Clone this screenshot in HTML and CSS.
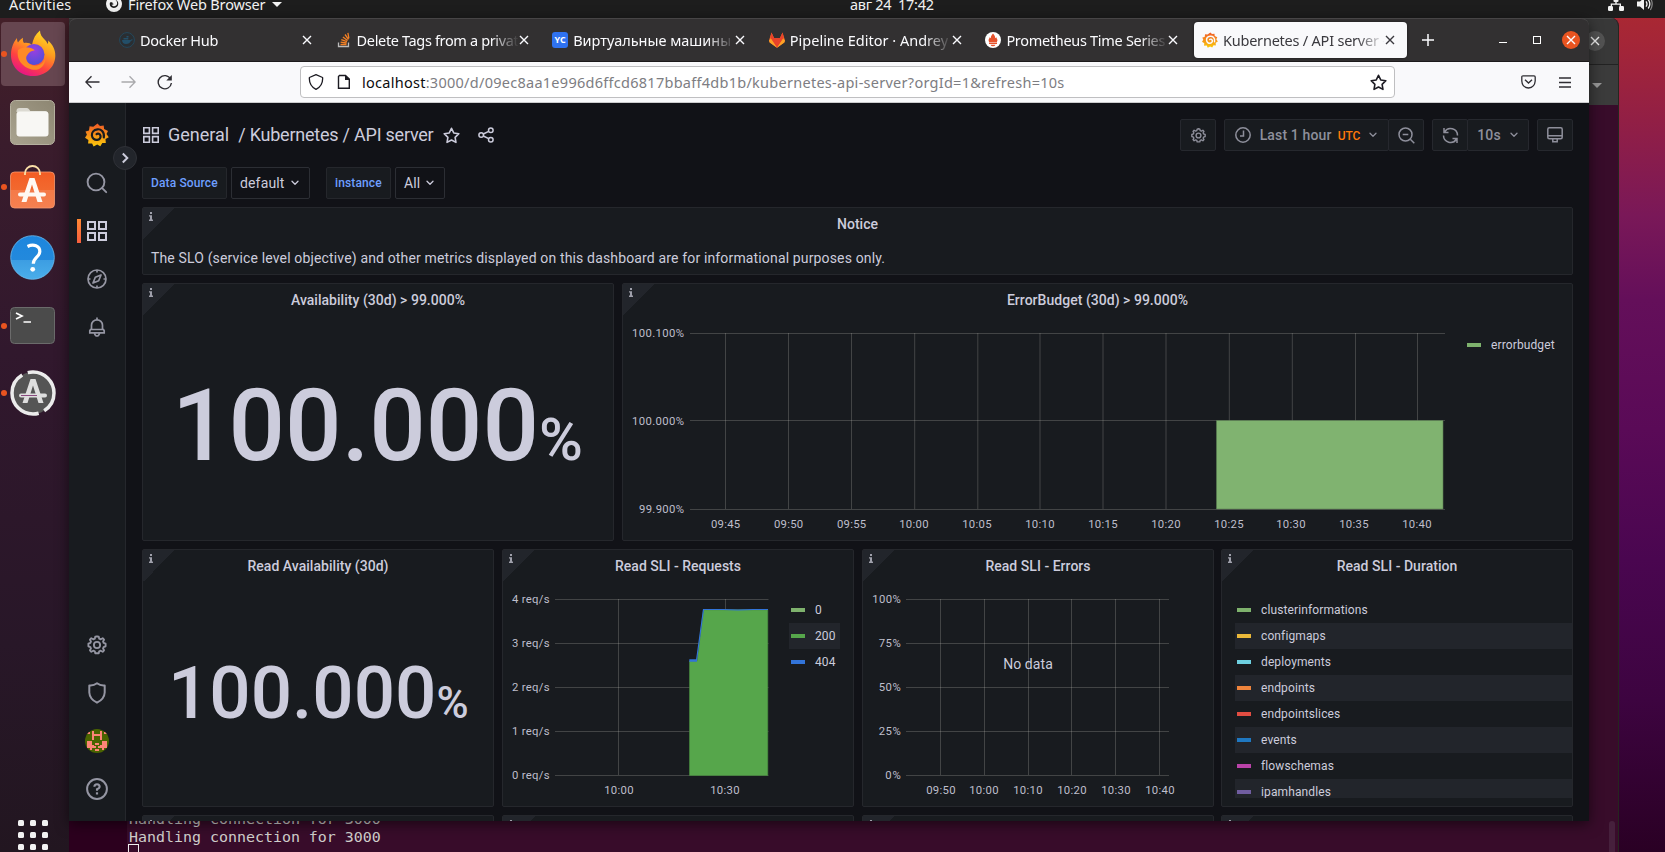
FILE: index.html
```html
<!DOCTYPE html>
<html lang="en">
<head>
<meta charset="utf-8">
<title>Kubernetes / API server - Grafana</title>
<link rel="stylesheet" href="styles.css">
</head>
<body>
<svg class="defs" width="0" height="0" aria-hidden="true">
  <defs>
    <linearGradient id="flame" x1="0.8" y1="0" x2="0.3" y2="1"><stop offset="0" stop-color="#ffe226"/><stop offset=".4" stop-color="#ff9a1f"/><stop offset=".7" stop-color="#ff4340"/><stop offset="1" stop-color="#e5138a"/></linearGradient>
    <radialGradient id="globe" cx=".5" cy=".3" r=".7"><stop offset="0" stop-color="#9a3fe0"/><stop offset="1" stop-color="#4f4fd8"/></radialGradient>
    <linearGradient id="graf" x1="0" y1="0" x2="0" y2="1"><stop offset="0" stop-color="#f05a28"/><stop offset="1" stop-color="#fbca0a"/></linearGradient>
    <linearGradient id="bag" x1="0" y1="0" x2="0" y2="1"><stop offset="0" stop-color="#f35d24"/><stop offset=".5" stop-color="#f2692f"/><stop offset=".5" stop-color="#f47a48"/><stop offset="1" stop-color="#f58050"/></linearGradient>
    <linearGradient id="blue" x1="0" y1="0" x2="0" y2="1"><stop offset="0" stop-color="#1c86de"/><stop offset=".55" stop-color="#2389dc"/><stop offset=".55" stop-color="#3c9de2"/><stop offset="1" stop-color="#4aaeea"/></linearGradient>
    <linearGradient id="khaki" x1="0" y1="1" x2="1" y2="0"><stop offset="0" stop-color="#a9a38f"/><stop offset="1" stop-color="#8d8672"/></linearGradient>
  </defs>
  <symbol id="x" viewBox="0 0 10 10"><path d="M1 1l8 8M9 1l-8 8" fill="none" stroke="currentColor" stroke-width="1.400"/></symbol>
  <symbol id="down" viewBox="0 0 8 6"><path d="M1 1.2l3 3 3-3" fill="none" stroke="currentColor" stroke-width="1.3" stroke-linecap="round" stroke-linejoin="round"/></symbol>
  <symbol id="info" viewBox="0 0 4 9"><path d="M1 0h2v2H1zM0 3.2h3V7.6h1V9H0V7.6h1V4.5H0z" fill="currentColor"/></symbol>
  <symbol id="grid" viewBox="0 0 20 20"><path d="M1 1h7v7H1zM12 1h7v7h-7zM1 12h7v7H1zM12 12h7v7h-7z" fill="none" stroke="currentColor" stroke-width="2"/></symbol>
  <symbol id="gear" viewBox="0 0 24 24"><g fill="none" stroke="currentColor" stroke-width="2" stroke-linejoin="round"><path d="M12 2.5 13.9 3 14.4 5.1 16.1 5.8 18.2 4.6 19.7 6.2 18.6 8.1 19.2 9.8 21.4 10.6V13.4L19.2 14.2 18.6 15.9 19.7 17.8 18.2 19.4 16.1 18.2 14.4 18.9 13.9 21H10.1L9.6 18.9 7.9 18.2 5.8 19.4 4.3 17.8 5.4 15.9 4.8 14.2 2.6 13.4V10.6L4.8 9.8 5.4 8.1 4.3 6.2 5.8 4.6 7.9 5.8 9.6 5.1 10.1 3z"/><circle cx="12" cy="12" r="3.4"/></g></symbol>
  <symbol id="grafana" viewBox="0 0 24 24">
    <path fill="url(#graf)" d="M12.5.6 15 3.1l3.7-.5.4 3.4 3.9 2-1.5 3 2.3 3.3-3.3 1.8.3 4-3.5-.2-2 3.4-3.1-1.7-3.6 2-1.5-3.2-4 .2.3-3.6L0 14.800l1.900-3L.500 8.400l3.500-1L4.600 3.300l3.700.5z"/>
    <path d="M18.800 14.500c1-6-3.300-8.600-6.300-8.200-4.200.500-5.900 3.500-5.600 6.200.300 2.800 2.700 4.700 5.200 4.400 2.800-.300 3.800-2.600 3.400-4.200-.500-2-2.700-2.500-3.900-1.500" fill="none" class="grafana-cut" stroke-width="2.200" stroke-linecap="round"/>
  </symbol>
  <symbol id="big-a" viewBox="0 0 28 26"><path d="M11.500 1h5l8 24h-5L14 7.500 8.500 25h-5z"/><path d="M2 15.500h24a2 2 0 0 1 0 4H2a2 2 0 0 1 0-4z"/></symbol>
  <symbol id="sstar" viewBox="0 0 16 16"><path d="M8 1.200l2.100 4.400 4.800.700-3.500 3.400.800 4.800L8 12.200l-4.200 2.300.800-4.800L1.100 6.300l4.800-.700z" fill="none" stroke="currentColor" stroke-width="1.500" stroke-linejoin="round"/></symbol>
</svg>

<header class="topbar">
  <span class="activities">Activities</span>
  <svg class="ff-mini" width="16" height="16" viewBox="0 0 16 16"><circle cx="8" cy="8" r="8" fill="#f2f2f2"/><path d="M4 6.500c1-.5 1.500-.3 2.500-.3-.5 1 .2 1.600 1.400 1.700-1.200 1-2 .8-2.400.5.900 2.700 5.300 2.300 5.600-.9.100-1.600-.7-3-1.700-3.600 4 .7 4.100 7.600-1.400 8.100-3.300.2-5-2.700-4-5.500z" fill="#1d1d1d"/></svg>
  <span class="appname">Firefox Web Browser</span>
  <i class="tri"></i>
  <span class="clock">авг 24&nbsp; 17:42</span>
  <span class="tray">
    <svg width="16" height="14" viewBox="0 0 16 14"><g fill="#f2f2f2"><rect x="5.500" y="0" width="5" height="5" rx="1"/><rect x="0" y="9" width="5" height="5" rx="1.200"/><rect x="11" y="9" width="5" height="5" rx="1.200"/><path d="M7.300 4h1.400v2.500H13V9h-1.300V7.700H4V9H2.700V6.500h4.600z"/></g></svg>
    <svg width="16" height="14" viewBox="0 0 16 14"><path d="M0 4.500h3L7 1v12L3 9.500H0z" fill="#f2f2f2"/><path d="M9 4.300q2 2.700 0 5.400M11.200 2.500q3.300 4.500 0 9" stroke="#f2f2f2" fill="none" stroke-width="1.300"/><path d="M13.400 1q3.600 6 0 12" stroke="#888" fill="none" stroke-width="1.200"/></svg>
  </span>
</header>

<nav class="dock">
  <div class="tile tile-active running">
    <svg width="46" height="47" viewBox="0 0 46 47"><path d="M23 46C9 46 .8 36 1 24.500 1.200 17 4 11.500 7 8c0 2 .3 3.300 1 4.500 1.500-2.300 3-3.700 5-4.800-.4 2 0 4 1 5.300 4-.5 6 .3 8 2 1-6 3.500-11 8-14.500 0 4 2 6.500 5 9.500 1.500 1.500 2 2.500 2.500 4 .7-1 .8-2 .7-3.500C43 15 45.500 20 45.300 26 45 38 35 46 23 46z" fill="url(#flame)"/><circle cx="24" cy="24.500" r="10.500" fill="url(#globe)"/><path d="M8 20c4-3 8-3.500 13-2 2.500 1 3 1.500 3.500 2.500-4 .5-5.500 2-7.500 5-2.500 3 1 10 8 10 5 0 9-2.500 10.500-8C35 38 28 41 21.500 39.500 12 37 6 29 8 20z" fill="#ff8a25"/></svg>
  </div>
  <div class="tile files">
    <svg width="45" height="45" viewBox="0 0 45 45"><rect x=".5" y=".5" width="44" height="44" rx="5" fill="url(#khaki)" stroke="#b5b09f"/><path d="M6.500 12V11a3 3 0 0 1 3-3h7a3 3 0 0 1 2.500 1.300l1.300 1.700H35a3 3 0 0 1 3 3z" fill="#dcdad2"/><rect x="6.500" y="11.500" width="32" height="25" rx="3" fill="#f8f7f4"/></svg>
  </div>
  <div class="tile software running">
    <svg width="45" height="44" viewBox="0 0 45 44"><rect x=".5" y="7" width="44" height="36" rx="4" fill="url(#bag)" stroke="#f59a72" stroke-width=".8"/><path d="M15 10V8.500a7.300 7.300 0 0 1 15 0V10" fill="none" stroke="#fbe0a8" stroke-width="1.800"/><use href="#big-a" x="8" y="12" width="28" height="26" fill="#fff8f2"/></svg>
  </div>
  <div class="tile help">
    <svg width="45" height="45" viewBox="0 0 45 45"><circle cx="22.500" cy="22.500" r="21.800" fill="url(#blue)" stroke="#6cbcf0" stroke-width=".8"/><path d="M17.500 11.500c6-2.800 12.500-.8 12.300 5.200-.2 5.300-6.500 5.800-6.500 12" fill="none" stroke="#fff" stroke-width="3.200"/><circle cx="22.700" cy="34.300" r="2.400" fill="#fff"/></svg>
  </div>
  <div class="tile terminal-app running">
    <svg width="45" height="37" viewBox="0 0 45 37"><rect x=".5" y=".5" width="44" height="36" rx="4" fill="#4b4b4b" stroke="#6b6b6b"/><path d="M6 6l6 3-6 3M13.500 15H21" fill="none" stroke="#fff" stroke-width="1.700"/></svg>
  </div>
  <div class="tile updater running">
    <svg width="46" height="46" viewBox="0 0 46 46"><circle cx="23" cy="23" r="21" fill="#555" stroke="#ececec" stroke-width="3.500" stroke-dasharray="60 5.970" stroke-dashoffset="-27"/><use href="#big-a" x="9" y="8" width="28" height="26" fill="#dedede"/><path d="M11 25.500h16" stroke="#8a4a80"/></svg>
  </div>
  <div class="apps"><i></i><i></i><i></i><i></i><i></i><i></i><i></i><i></i><i></i></div>
</nav>

<section class="term-window">
  <div class="term-title"><span class="term-close"><svg width="10" height="10"><use href="#x"/></svg></span></div>
  <div class="term-tools"><i class="tri"></i></div>
  <div class="term-body">
    <pre>Handling connection for 3000
Handling connection for 3000
</pre>
    <i class="cursor"></i><i class="scroll"></i>
  </div>
</section>

<main class="window">
  <div class="tabbar">
    <div class="tab"><svg width="16" height="16" viewBox="0 0 16 16"><circle cx="8" cy="8" r="7.400" fill="#2a2e32" stroke="#24485c"/><path d="M3 8h8.500q1-.2 1.300-1 .6.700 1 .8-.6 1-1.800 1-1.500 3.300-5 3.200Q3.200 11.800 3 8zM4.500 6h4.800v1.500H4.500zM7.500 4h2v1.500h-2z" fill="#234f69"/></svg><span class="label l1">Docker Hub</span><svg class="close"><use href="#x"/></svg></div>
    <div class="tab"><svg width="16" height="16" viewBox="0 0 16 16"><path d="M2.500 10.500v4h10v-4" fill="none" stroke="#bcbbbb" stroke-width="1.300"/><path d="M4.500 12.500h6M4.600 10.200l6 .8M5.300 7.600l5.700 2M6.900 4.900l4.700 3.700M9 2.500l3.500 4.900M11.900.8l1 5.500" stroke="#f48024" stroke-width="1.300" fill="none"/></svg><span class="label l2">Delete Tags from a private</span><svg class="close"><use href="#x"/></svg></div>
    <div class="tab"><span class="yc">YC</span><span class="label l3">Виртуальные машины |</span><svg class="close"><use href="#x"/></svg></div>
    <div class="tab"><svg width="16" height="16" viewBox="0 0 16 16"><path d="M0 8.500 2.500.6 5 6h6L13.500.6 16 8.500l-.7 2L8 15.800.7 10.500z" fill="#fc6d26"/><path d="M2.500.6 5 6h6L13.500.6l1.200 5L8 15.800 1.300 5.600z" fill="#e8432a"/><path d="M0 8.500 2 6.800 8 15.800l6-9 2 1.700-.7 2L8 15.800.7 10.500z" fill="#fca326"/></svg><span class="label l4">Pipeline Editor · Andrey G</span><svg class="close"><use href="#x"/></svg></div>
    <div class="tab"><svg width="16" height="16" viewBox="0 0 16 16"><circle cx="8" cy="8" r="8" fill="#fff"/><path d="M8 1.500q2.800 3 1.900 4.800 1.200-.6 1.200-1.400Q13 7.500 12 10H4Q3 7.500 4.900 4.900q0 .8 1.200 1.400Q5.200 4.500 8 1.500zM4 10.600h8v1.500H4zM5.500 12.700h5q-.7 1.500-2.500 1.500t-2.500-1.500z" fill="#e6522c"/></svg><span class="label l5">Prometheus Time Series C</span><svg class="close"><use href="#x"/></svg></div>
    <div class="tab tab-on"><svg width="16" height="16" class="on-light"><use href="#grafana"/></svg><span class="label l6">Kubernetes / API server -</span><svg class="close"><use href="#x"/></svg></div>
    <svg class="plus" width="12" height="12" viewBox="0 0 12 12"><path d="M6 0v12M0 6h12" stroke="#fbfbfe" stroke-width="1.500"/></svg>
    <div class="winctl">
      <i class="min"></i><i class="max"></i><span class="quit"><svg width="10" height="10"><use href="#x"/></svg></span>
    </div>
  </div>
  <div class="navbar">
    <svg class="nav-back" width="15" height="14" viewBox="0 0 15 14"><path d="M14.500 7H1M6.500 1.200.9 7l5.600 5.800" fill="none" stroke="#2f2e33" stroke-width="1.300"/></svg>
    <svg class="nav-fwd" width="15" height="14" viewBox="0 0 15 14"><path d="M.5 7H14M8.500 1.200 14.100 7l-5.600 5.800" fill="none" stroke="#a9a9ac" stroke-width="1.300"/></svg>
    <svg class="nav-reload" width="16" height="16" viewBox="0 0 16 16"><path d="M13.600 5A6.600 6.600 0 1 0 14.400 9" fill="none" stroke="#2f2e33" stroke-width="1.400"/><path d="M14.800 1v5.500H9.300z" fill="#2f2e33"/></svg>
    <div class="urlbar">
      <svg width="16" height="16" viewBox="0 0 16 16"><path d="M8 .7 14.600 3.500Q15.200 11.500 8 15.400.8 11.500 1.400 3.500z" fill="none" stroke="#1c1b22" stroke-width="1.300" stroke-linejoin="round"/></svg>
      <svg class="doc" width="14" height="16" viewBox="0 0 14 16"><path d="M2.500 1.500h6L12.300 5v9.300H1.500V2.500z" fill="none" stroke="#1c1b22" stroke-width="1.400"/><path d="M8 1v5h5z" fill="#1c1b22"/></svg>
      <span class="url"><b>localhost</b>:3000/d/09ec8aa1e996d6ffcd6817bbaff4db1b/kubernetes-api-server?orgId=1&amp;refresh=10s</span>
      <svg class="urlstar" width="17" height="17"><use href="#sstar"/></svg>
    </div>
    <svg class="pocket" width="15" height="14" viewBox="0 0 15 14"><path d="M2 .8h11q1.200 0 1.200 1.200v4Q13.700 12.500 7.500 13 1.300 12.500.8 6V2Q.8.800 2 .8z" fill="none" stroke="#2f2e33" stroke-width="1.300"/><path d="M4 4.800l3.500 3.200L11 4.800" fill="none" stroke="#2f2e33" stroke-width="1.400"/></svg>
    <svg class="burger" width="12" height="11" viewBox="0 0 12 11"><path d="M0 1h12M0 5.500h12M0 10h12" stroke="#2f2e33" stroke-width="1.300"/></svg>
  </div>

  <div class="grafana">
    <aside class="side">
      <svg width="24" height="24" class="logo"><use href="#grafana"/></svg>
      <svg width="22" height="22" viewBox="0 0 22 22"><g fill="none" stroke="currentColor" stroke-width="1.900" stroke-linecap="round"><circle cx="10" cy="10" r="8.400"/><path d="M16.200 16.200l4 4"/></g></svg>
      <span class="side-on"><svg width="20" height="20"><use href="#grid"/></svg></span>
      <svg width="20" height="20" viewBox="0 0 20 20"><g fill="none" stroke="currentColor" stroke-width="1.700"><circle cx="10" cy="10" r="9"/><path d="M10 1v2.500M10 16.500V19M1 10h2.500M16.500 10H19"/><path d="M14 6l-2.300 5.700L6 14l2.300-5.700z" stroke-linejoin="round"/></g></svg>
      <svg width="20" height="20" viewBox="0 0 20 20"><g fill="none" stroke="currentColor" stroke-width="1.700"><path d="M10 .5v2.300M4.500 12.500V8.300a5.500 5.500 0 0 1 11 0v4.200M3.500 12.500h13l.7 1.300v2H2.800v-2zM7.500 16.500q.7 2.500 2.500 2.500t2.500-2.500"/></g></svg>
      <svg class="side-gap" width="23" height="23"><use href="#gear"/></svg>
      <svg width="20" height="20" viewBox="0 0 20 20"><path d="M3 3.200q4 .4 7-2 3 2.400 7 2v6.300q-.3 6-7 9.300-6.700-3.300-7-9.300z" fill="none" stroke="currentColor" stroke-width="1.800" stroke-linejoin="round"/></svg>
      <svg width="24" height="24" viewBox="0 0 24 24"><clipPath id="av"><circle cx="12" cy="12" r="12"/></clipPath><g clip-path="url(#av)"><path d="M0 0h24v24H0z" fill="#4a6400"/><path d="M7 2h2v3h6V2h2v9h-2V7H9v4H7zM2 3h3v2H2zM19 3h3v2h-3zM2 12h5v4h2v3H7v2H5v-2H2zM17 12h5v7h-3v2h-2v-2h-2v-3h2zM10 14h4v2h-4zM9 17h2v2H9zM13 17h2v2h-2zM10 20h4v2h-4z" fill="#fd8577"/></g></svg>
      <svg width="20" height="20" viewBox="0 0 20 20"><g fill="none" stroke="currentColor" stroke-width="1.800"><circle cx="10" cy="10" r="9"/><path d="M7.600 8Q7.700 5.700 10 5.700T12.400 8Q12.300 9.500 10 10.200V11.500" stroke-width="1.900"/></g><path d="M9 13h2v2H9z" fill="currentColor"/></svg>
      <span class="expander"><svg width="8" height="12" viewBox="0 0 8 12"><path d="M1.800 1.500 6.300 6l-4.500 4.500" fill="none" stroke="#ccccdc" stroke-width="2"/></svg></span>
    </aside>

    <div class="content">
      <div class="head">
        <svg width="16" height="16" class="bc"><use href="#grid"/></svg>
        <span class="crumb">General</span><span class="crumb c2">/ Kubernetes / API server</span>
        <svg width="17" height="17" class="st"><use href="#sstar"/></svg>
        <svg width="16" height="16" viewBox="0 0 16 16" class="sh"><g fill="none" stroke="currentColor" stroke-width="1.500"><circle cx="3.200" cy="8" r="2.300"/><circle cx="12.800" cy="3.200" r="2.300"/><circle cx="12.800" cy="12.800" r="2.300"/><path d="M5.300 7l5.400-2.700M5.300 9l5.400 2.700"/></g></svg>
        <div class="tools">
          <span class="btn b-gear"><svg width="17" height="17"><use href="#gear"/></svg></span>
          <span class="group">
            <span class="btn b-time"><svg width="16" height="16" viewBox="0 0 16 16"><g fill="none" stroke="currentColor" stroke-width="1.500"><circle cx="8" cy="8" r="7.200"/><path d="M8.500 3.500V9H5"/></g></svg><span class="t1">Last 1 hour</span><span class="utc">UTC</span><svg width="8" height="6"><use href="#down"/></svg></span>
            <span class="btn b-zoom"><svg width="17" height="17" viewBox="0 0 17 17"><g fill="none" stroke="currentColor" stroke-width="1.500"><circle cx="7.500" cy="7.500" r="6.500"/><path d="M12.300 12.300l4 4M4.700 7.500h5.600"/></g></svg></span>
          </span>
          <span class="group">
            <span class="btn b-ref"><svg width="17" height="17" viewBox="0 0 17 17"><g fill="none" stroke="currentColor" stroke-width="1.500"><path d="M2 1v4.500h4.500M2.500 5A7 7 0 0 1 15.500 8.500M15 16v-4.500h-4.500M14.500 12A7 7 0 0 1 1.500 8.500"/></g></svg></span>
            <span class="btn b-10"><span>10s</span><svg width="8" height="6"><use href="#down"/></svg></span>
          </span>
          <span class="btn b-tv"><svg width="16" height="16" viewBox="0 0 16 16"><g fill="none" stroke="currentColor" stroke-width="1.500"><rect x=".8" y=".8" width="14.400" height="11" rx="1.500"/><path d="M1 8.700h14M5.800 12v2.700h4.400V12"/></g></svg></span>
        </div>
      </div>

      <div class="vars">
        <span class="vlabel v1">Data Source</span><span class="vsel s1">default<svg width="8" height="6"><use href="#down"/></svg></span>
        <span class="vlabel v2">instance</span><span class="vsel s2">All<svg width="8" height="6"><use href="#down"/></svg></span>
      </div>

      <section class="panel notice"><i class="corner"><svg width="4" height="9"><use href="#info"/></svg></i><h2>Notice</h2><p>The SLO (service level objective) and other metrics displayed on this dashboard are for informational purposes only.</p></section>

      <div class="row2">
        <section class="panel stat"><i class="corner"><svg width="4" height="9"><use href="#info"/></svg></i><h2>Availability (30d) &gt; 99.000%</h2><div class="big">100.000<small>%</small></div></section>
        <section class="panel"><i class="corner"><svg width="4" height="9"><use href="#info"/></svg></i><h2>ErrorBudget (30d) &gt; 99.000%</h2>
          <div class="split">
            <svg class="chart" width="830" height="225" viewBox="623 316 830 225">
              <path class="gl" d="M690 333.500h755M690 420.500h755M690 509.500h755M725.500 333v176M788.500 333v176M851.500 333v176M914.700 333v176M977.800 333v176M1040 333v176M1103 333v176M1166 333v176M1229.300 333v176M1292.300 333v176M1355.500 333v176M1417.500 333v176"/>
              <path d="M1216.500 420.500h226.500v88.500h-226.500z" fill="#80b370" stroke="#5b7f52" stroke-width=".6"/>
              <g class="yl"><text x="684" y="337" textLength="52">100.100%</text><text x="684" y="425" textLength="52">100.000%</text><text x="684" y="513" textLength="45">99.900%</text></g>
              <g class="xl"><text x="725.700" y="528">09:45</text><text x="788.700" y="528">09:50</text><text x="851.700" y="528">09:55</text><text x="914" y="528">10:00</text><text x="977" y="528">10:05</text><text x="1040" y="528">10:10</text><text x="1103" y="528">10:15</text><text x="1166" y="528">10:20</text><text x="1229" y="528">10:25</text><text x="1291" y="528">10:30</text><text x="1354" y="528">10:35</text><text x="1417" y="528">10:40</text></g>
            </svg>
            <ul class="legend lg-a"><li><i class="c-green"></i>errorbudget</li></ul>
          </div>
        </section>
      </div>

      <div class="row3">
        <section class="panel stat"><i class="corner"><svg width="4" height="9"><use href="#info"/></svg></i><h2>Read Availability (30d)</h2><div class="big mid">100.000<small>%</small></div></section>
        <section class="panel"><i class="corner"><svg width="4" height="9"><use href="#info"/></svg></i><h2>Read SLI - Requests</h2>
          <div class="split">
            <svg class="chart" width="280" height="225" viewBox="503 582 280 225">
              <path class="gl" d="M555 599.500h213.500M555 643.500h213.500M555 687.500h213.500M555 731.500h213.500M555 775.500h213.500M618.500 599v176M725.500 599v176"/>
              <path d="M689.500 661H697L703.500 609.800H767.800V775.500H689.500z" fill="#56a64b" stroke="#488a40" stroke-width=".6"/>
              <path d="M689.300 660.500H697" stroke="#3274d9" stroke-width="2.600"/><path d="M696.500 660.500 703.500 609.500H723l15 .5 15-.5H768" fill="none" stroke="#3274d9" stroke-width="1.200"/>
              <g class="yl"><text x="549.500" y="603" textLength="37.500">4 req/s</text><text x="549.500" y="647" textLength="37.500">3 req/s</text><text x="549.500" y="691" textLength="37.500">2 req/s</text><text x="549.500" y="735" textLength="37.500">1 req/s</text><text x="549.500" y="779" textLength="37.500">0 req/s</text></g>
              <g class="xl"><text x="619" y="794">10:00</text><text x="725" y="794">10:30</text></g>
            </svg>
            <ul class="legend lg-b"><li><i class="c-green"></i>0</li><li><i class="c-dgreen"></i>200</li><li><i class="c-blue"></i>404</li></ul>
          </div>
        </section>
        <section class="panel"><i class="corner"><svg width="4" height="9"><use href="#info"/></svg></i><h2>Read SLI - Errors</h2>
          <svg class="chart" width="350" height="225" viewBox="863 582 350 225">
            <path class="gl" d="M906 599.500h263M906 643.500h263M906 687.500h263M906 731.500h263M906 775.500h263M940.500 599v176M984.500 599v176M1028.500 599v176M1071.500 599v176M1115.500 599v176M1159.500 599v176"/>
            <g class="yl"><text x="900.700" y="603" textLength="28.500">100%</text><text x="900.700" y="647" textLength="22">75%</text><text x="900.700" y="691" textLength="22">50%</text><text x="900.700" y="735" textLength="22">25%</text><text x="900.700" y="779" textLength="15.500">0%</text></g>
            <g class="xl"><text x="941" y="794">09:50</text><text x="984" y="794">10:00</text><text x="1028" y="794">10:10</text><text x="1072" y="794">10:20</text><text x="1116" y="794">10:30</text><text x="1160" y="794">10:40</text></g>
            <text class="nodata" x="1028" y="669" textLength="49.500">No data</text>
          </svg>
        </section>
        <section class="panel last"><i class="corner"><svg width="4" height="9"><use href="#info"/></svg></i><h2>Read SLI - Duration</h2>
          <ul class="legend lg-c"><li><i class="c-green"></i>clusterinformations</li><li><i class="c-yellow"></i>configmaps</li><li><i class="c-cyan"></i>deployments</li><li><i class="c-orange"></i>endpoints</li><li><i class="c-red"></i>endpointslices</li><li><i class="c-navy"></i>events</li><li><i class="c-pink"></i>flowschemas</li><li><i class="c-purple"></i>ipamhandles</li></ul>
        </section>
        <section class="panel"><i class="corner"><svg width="4" height="9"><use href="#info"/></svg></i></section>
        <section class="panel"><i class="corner"><svg width="4" height="9"><use href="#info"/></svg></i></section>
        <section class="panel"><i class="corner"><svg width="4" height="9"><use href="#info"/></svg></i></section>
        <section class="panel last"><i class="corner"><svg width="4" height="9"><use href="#info"/></svg></i></section>
      </div>
    </div>
  </div>
</main>
</body>
</html>
```
FILE: styles.css
```css
* { box-sizing: border-box; }
body {
  margin: 0; width: 1665px; height: 852px; overflow: hidden; position: relative;
  font-family: Roboto, "Noto Sans", sans-serif; color: #ccccdc;
  background: linear-gradient(#ac2930 0, #a52637 40px, #921f45 120px, #7a1858 215px, #640f5a 300px, #5a0a57 430px, #4a0650 560px, #3d0440 700px, #2a0024 852px);
}
.defs { position: absolute; }
svg { display: block; flex: none; }
i { font-style: normal; }
h2, p, ul, pre { margin: 0; padding: 0; }

/* Top bar */
.topbar {
  height: 18px; background: #1d1d1d; color: #f2f2f2; display: flex; position: relative;
  font: 14.500px/18px "Noto Sans", sans-serif; white-space: nowrap; overflow: hidden;
}
.topbar > span { margin-top: -5px; }
.activities { margin-left: 9px; width: 97px; letter-spacing: .2px; }
.ff-mini { margin-top: -4px; }
.appname { margin-left: 6px; width: 144px; letter-spacing: -.15px; }
.tri { width: 0; height: 0; border: 5px solid transparent; border-top-color: #f2f2f2; border-bottom: 0; }
.topbar .tri { margin-top: 2px; }
.clock { margin-left: 568px; width: 758px; letter-spacing: -.3px; }
.topbar .tray { display: flex; gap: 13px; margin-top: -3px; }

/* Dock */
.dock {
  position: absolute; left: 0; top: 18px; width: 69px; height: 834px; padding-top: 4px;
  background: linear-gradient(#431f28, #3a1c2c 15%, #31182d 40%, #2c172a 60%, #281728 75%, #221620);
  display: flex; flex-direction: column;
}
.tile { position: relative; width: 64px; margin-left: 1px; padding-right: 1px; display: flex; justify-content: center; }
.tile-active { height: 64px; padding: 0 0 1px; align-items: center; border-radius: 4px; background: #664650; }
.running::before { content: ""; position: absolute; left: 0; top: calc(50% - 3px); width: 6px; height: 6px; border-radius: 50%; background: #e95420; }
.files { margin-top: 14px; }
.software { margin-top: 20px; }
.help { margin-top: 26px; }
.terminal-app { margin-top: 27px; }
.updater { margin-top: 26px; }
.apps { display: grid; grid-template-columns: repeat(3, 6px); gap: 6px; margin: 404px 0 0 18px; }
.apps i { height: 6px; border-radius: 1.500px; background: #f2f2f2; }

/* Terminal window */
.term-window { position: absolute; left: 69px; top: 18px; width: 1550px; height: 834px; background: #2c001e; border-radius: 0 8px 0 0; border-right: 1px solid #26261f; display: flex; flex-direction: column; overflow: hidden; }
.term-title { height: 47px; flex: none; background: #383838; border-top: 1px solid #484848; border-bottom: 1px solid #222; display: flex; justify-content: flex-end; align-items: center; padding: 0 13px 1px 0; }
.term-close { width: 20px; height: 20px; border-radius: 50%; background: #525252; color: #eee; display: flex; align-items: center; justify-content: center; }
.term-tools { height: 40px; flex: none; background: #3b3b3b; display: flex; justify-content: flex-end; align-items: center; padding-right: 16px; }
.term-tools .tri { border-top-color: #989898; }
.term-body { flex: 1; margin-left: 58px; background: #380c2a; position: relative; padding: 705px 0 0 2px; }
.term-body pre { font: 14.950px/18px "DejaVu Sans Mono", monospace; color: #d0cfcc; height: 36px; }
.cursor { position: absolute; left: 1px; top: 739px; width: 11px; height: 16px; border: 1px solid #eee; }
.scroll { position: absolute; right: 3px; top: 716px; width: 6px; height: 60px; border-radius: 3px; background: #46203c; }

/* Browser window */
.window { position: absolute; left: 69px; top: 18px; width: 1520px; height: 803px; border-radius: 8px 8px 0 0; overflow: visible; box-shadow: 0 3px 14px rgba(0,0,0,.55); display: flex; flex-direction: column; }
.tabbar { height: 44px; flex: none; background: #323031; border-top: 1px solid #474546; border-bottom: 1px solid #1c1a1b; border-radius: 8px 8px 0 0; display: flex; align-items: flex-start; padding: 3px 0 0 42px; color: #fbfbfe; }
.tab { width: 212.600px; height: 36px; margin-right: 4px; padding: 0 11px 0 8px; display: flex; align-items: center; font: 14.500px/20px "Noto Sans", sans-serif; border-radius: 4px; }
.tab .label { margin-left: 5px; width: 161px; white-space: nowrap; overflow: hidden; -webkit-mask-image: linear-gradient(90deg, #000 134px, transparent 162px); mask-image: linear-gradient(90deg, #000 134px, transparent 162px); }
.tab .l1 { letter-spacing: -.25px; }
.tab .l2 { letter-spacing: -.35px; }
.tab .l3 { letter-spacing: -.02px; }
.tab .l4 { letter-spacing: 0; }
.tab .l5 { letter-spacing: -.3px; }
.tab .l6 { letter-spacing: -.22px; }
.tab .close { width: 10px; height: 10px; margin-left: 1px; }
.tab-on { background: #f9f9fb; color: #3a393e; box-shadow: 0 0 3px rgba(0,0,0,.5); }
.yc { width: 16px; height: 16px; border-radius: 3px; background: #2f72f0; color: #fff; font: bold 9px/16px "Open Sans", sans-serif; text-align: center; }
.plus { margin: 12px 0 0 11px; }
.winctl { display: flex; margin-left: auto; align-items: center; height: 36px; padding-right: 9px; }
.min { width: 8px; height: 1px; background: #fff; margin: 4px 26px 0 0; }
.max { width: 8px; height: 8px; border: 1px solid #fff; margin-right: 21px; }
.quit { width: 18px; height: 18px; border-radius: 50%; background: #e95420; display: flex; align-items: center; justify-content: center; }

.navbar { height: 41px; flex: none; background: #f9f9fb; border-bottom: 1px solid #ccccce; display: flex; align-items: center; }
.nav-back { margin-left: 16px; }
.nav-fwd { margin-left: 21px; }
.nav-reload { margin-left: 21px; }
.urlbar { width: 1095px; height: 32px; margin-left: 127px; background: #fff; border: 1px solid #bfbfc1; border-radius: 4px; display: flex; align-items: center; padding-left: 7px; }
.doc { margin-left: 13px; }
.url { margin-left: 11px; font: 14.500px/20px "Noto Sans", sans-serif; color: #7d7d82; white-space: nowrap; letter-spacing: .27px; }
.url b { font-weight: 400; color: #0c0c0d; }
.urlstar { margin-left: auto; margin-right: 7px; color: #1c1b22; }
.pocket { margin-left: 126px; }
.burger { margin-left: 23px; }

/* Grafana shell */
.grafana { flex: 1; min-height: 0; display: flex; background: #111217; overflow: hidden; }
.side { width: 57px; flex: none; background: #181b1f; border-right: 1px solid #25272c; display: flex; flex-direction: column; align-items: center; color: #9596a3; position: relative; z-index: 1; height: 718px; padding-top: 8px; }
.side > svg, .side-on { height: 48px; width: 22px; }
.side > svg.logo { width: 24px; }
.side > svg:nth-last-child(3) { width: 24px; }
.side > svg:nth-of-type(3), .side > svg:nth-of-type(4) { width: 20px; }
.side-on { width: 56px; display: flex; align-items: center; justify-content: center; color: #ccccdc; background: linear-gradient(#ff8833, #f55f3e) 8px 12px / 4px 24px no-repeat; }
.side > .side-gap { margin-top: 270px; }
.expander { position: absolute; left: 44px; top: 43px; width: 24px; height: 24px; border-radius: 50%; background: #22252b; border: 1px solid #2f3137; display: flex; align-items: center; justify-content: center; }
.on-light { --cut: #f9f9fb; }
.grafana-cut { stroke: var(--cut, #181b1f); }
.content { flex: 1; min-width: 0; padding: 16px 16px 0; }

.head { height: 32px; display: flex; align-items: center; color: #ccccdc; }
.bc { margin-left: 1px; }
.crumb { font-size: 18px; line-height: 22px; margin-left: 9px; white-space: pre; }
.c2 { letter-spacing: -.23px; }
.st { margin-left: 9px; }
.sh { margin-left: 18px; }
.tools { margin-left: auto; display: flex; gap: 8px; color: #8e8f9b; font-size: 14px; font-weight: 500; }
.group { display: flex; }
.btn { height: 32px; background: #181b1f; border: 1px solid #26282e; border-radius: 2px; display: flex; align-items: center; justify-content: center; letter-spacing: .15px; }
.b-gear, .b-tv { width: 36px; }
.b-time { width: 165px; padding-right: 1px; }
.t1 { margin-left: 9px; }
.utc { color: #ff780a; font-size: 12px; margin: 1px 9px 0 6px; letter-spacing: -.05px; }
.b-zoom { width: 36px; margin-left: -1px; }
.b-ref { width: 36px; }
.b-10 { width: 62px; margin-left: -1px; gap: 9px; padding-right: 1px; }

.vars { display: flex; height: 32px; margin: 16px 0 8px; }
.vlabel { background: #181b1f; border: 1px solid #25272c; border-radius: 2px; color: #6e9fff; font-size: 12px; font-weight: 500; line-height: 31px; padding-left: 8px; letter-spacing: .13px; }
.vsel { border: 1px solid #2c2e34; border-radius: 2px; font-size: 14px; line-height: 30px; padding-left: 8px; display: flex; letter-spacing: .15px; }
.vsel svg { margin: 12px 0 0 6px; }
.v1 { width: 85px; } .s1 { width: 79px; margin-left: 4px; }
.v2 { width: 65px; margin-left: 16px; } .s2 { width: 50px; margin-left: 4px; }

/* Panels */
.panel { background: #181b1f; border: 1px solid #25272c; border-radius: 2px; position: relative; overflow: hidden; }
.panel h2 { font-size: 14px; font-weight: 500; line-height: 32px; height: 32px; text-align: center; letter-spacing: .03px; }
.corner { position: absolute; left: 0; top: 0; width: 32px; height: 32px; background: linear-gradient(135deg, #22252b 50%, transparent 50%); color: #9fa0ab; padding: 4px 0 0 6px; }
.notice { height: 68px; margin-bottom: 8px; }
.notice p { font-size: 14px; line-height: 20px; padding: 8px 8px 0; letter-spacing: .15px; }
.row2 { display: grid; grid-template-columns: 472px 951px; gap: 8px; height: 258px; margin-bottom: 8px; }
.row3 { display: grid; grid-template-columns: 352px 352px 352px 351px; grid-auto-rows: 258px; gap: 8px; }
.last { margin-left: -1px; }
.big { font-size: 99.500px; font-weight: 500; line-height: 100px; white-space: nowrap; padding: 60px 0 0 29px; }
.big small { font-size: 59.700px; }
.mid { font-size: 72.800px; padding: 61px 0 0 25px; }
.mid small { font-size: 43.700px; }
.split { display: flex; }
.gl { fill: none; stroke: #c8c8c0; stroke-opacity: .24; stroke-width: 1; }
.chart text { font-size: 11.300px; fill: #bfbfcc; }
.yl text { text-anchor: end; }
.xl text { text-anchor: middle; letter-spacing: .3px; }
.chart .nodata { font-size: 14px; text-anchor: middle; fill: #ccccdc; }

.legend { list-style: none; font-size: 12px; letter-spacing: .12px; }
.legend li { height: 26px; display: flex; align-items: center; }
.legend li:nth-child(even) { background: #22252b; }
.legend i { width: 14px; height: 4px; margin: 0 10px 0 2px; }
.lg-a { padding: 16px 0 0 12px; }
.lg-b { padding-top: 15px; margin-left: 6px; width: 51px; }
.lg-c { margin: 15px 0 0 13px; height: 201px; overflow: hidden; }
.c-green { background: #7eb26d; } .c-dgreen { background: #56a64b; } .c-blue { background: #3274d9; }
.c-yellow { background: #eab839; } .c-cyan { background: #6ed0e0; } .c-orange { background: #ef843c; }
.c-red { background: #e24d42; } .c-navy { background: #1f78c1; } .c-pink { background: #ba43a9; } .c-purple { background: #705da0; }
```
